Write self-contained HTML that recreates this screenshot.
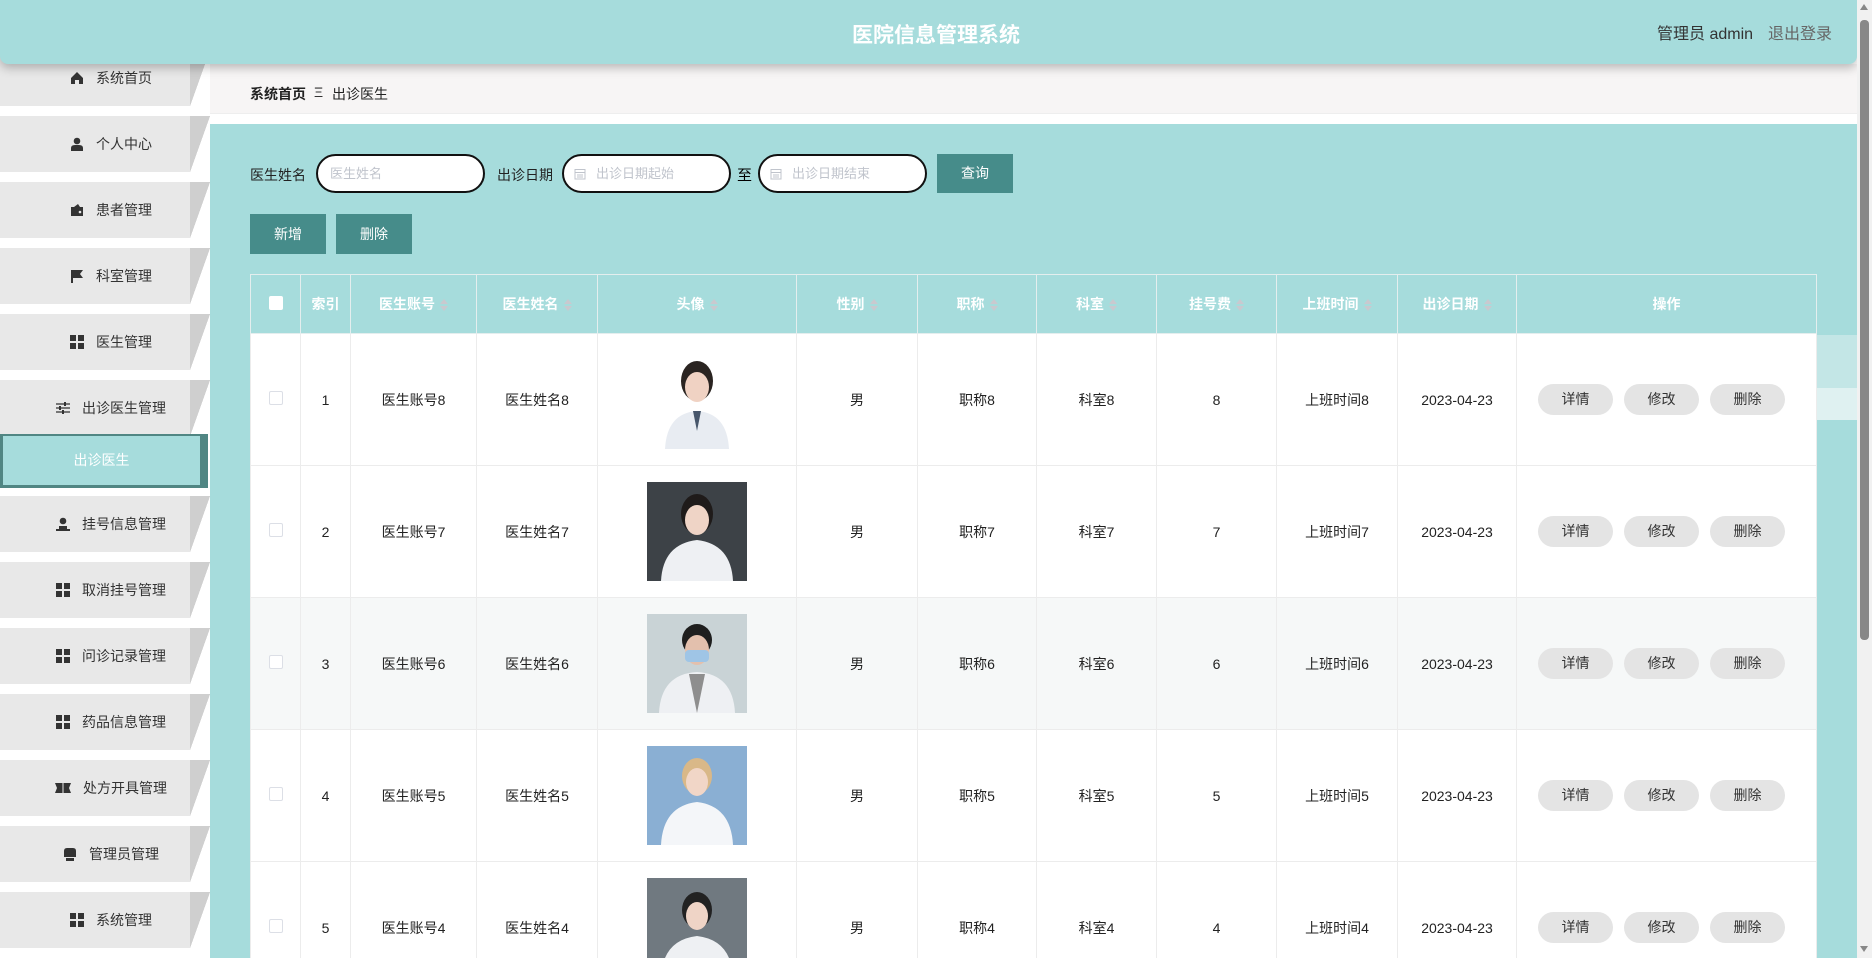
<!DOCTYPE html>
<html><head><meta charset="utf-8"><style>
*{box-sizing:border-box;margin:0;padding:0}
html,body{width:1872px;height:958px;overflow:hidden}
body{background:#fff;font-family:"Liberation Sans","Noto Sans CJK SC",sans-serif;font-size:14px;color:#333}
#wrap{position:relative;width:1872px;height:958px;overflow:hidden}
.abs{position:absolute}
.hdr{left:0;top:0;width:1857px;height:64px;background:#a6dcdc;border-radius:0 0 8px 8px;box-shadow:0 4px 10px rgba(0,0,0,.25);z-index:5}
.title{left:0;width:1872px;top:19px;text-align:center;color:#fff;font-size:21px;font-weight:bold;z-index:6}
.user{left:1657px;top:20px;font-size:16px;color:#333;z-index:6}
.logout{left:1768px;top:20px;font-size:16px;color:#666;z-index:6}
.sb{left:0;top:0;width:210px;height:958px;background:#fff}
.item{position:absolute;left:0;width:210px;height:56px}
.item .g{position:absolute;left:0;top:0;width:190px;height:56px;background:#e8e8e8}
.item .d{position:absolute;left:190px;top:0;width:20px;height:56px;background:linear-gradient(to bottom right,#cfcfcf 50%,#fff 50.5%)}
.item .c{position:absolute;left:32px;width:158px;top:0;height:56px;display:flex;align-items:center;justify-content:center;font-size:14px;color:#333}
.item svg{margin-right:12px}
.act{left:0;top:434px;width:208px;height:54px;background:#a6dcdc;border-right:8px solid #508683;border-bottom:3px solid #508683;border-top:2px solid #508683;border-left:3px solid #508683;color:#fff;text-align:center;line-height:48px;font-size:14px}
.bc{left:210px;top:64px;width:1647px;height:50px;background:#f7f5f5;border-bottom:1px solid #eee}
.main{left:210px;top:124px;width:1647px;height:834px;background:#a6dcdc}
.lbl{font-size:14px;color:#222}
.inp{height:39px;border:2px solid #111;border-radius:20px;background:#fff;color:#c0c4cc;font-size:13px;line-height:35px;padding-left:12px}
.btn{background:#468c8a;color:#fff;text-align:center;font-size:14px}
table{position:absolute;left:250px;top:274px;border-collapse:collapse;table-layout:fixed;width:1566px}
th{height:59px;background:#a6dcdc;color:#fff;font-weight:bold;border:1px solid #e4eeee;font-size:14px}
td{height:132px;border:1px solid #ececec;text-align:center;font-size:14px;color:#222;background:#fff}
td.ops{text-align:left;padding-left:21px}
tr.alt td{background:#f6f8f8}
.ar{display:inline-block;width:8px;height:12px;vertical-align:middle;margin-left:5px;position:relative}
.ar:before{content:"";position:absolute;left:0;top:0;border:4px solid transparent;border-bottom:5px solid #c9c9cf;border-top:0}
.ar:after{content:"";position:absolute;left:0;top:7px;border:4px solid transparent;border-top:5px solid #c9c9cf;border-bottom:0}
.cb{display:inline-block;width:14px;height:14px;border:1px solid #dcdfe6;border-radius:2px;background:#fff}
.op{display:inline-block;width:75px;height:31px;line-height:31px;border-radius:16px;background:#e4e4e4;color:#333;margin-right:11px;font-size:14px;text-align:center}
.ph{display:inline-block;vertical-align:middle}
.sc{left:1857px;top:0;width:15px;height:958px;background:#f1f1f1;z-index:9}
</style></head><body><div id="wrap">
<div class="abs sb"></div>
<div class="abs main"></div>
<div class="abs bc"><span class="abs" style="left:40px;top:20px;font-weight:bold;font-size:14px;color:#222">系统首页</span><span class="abs" style="left:104px;top:20px;color:#333">Ξ</span><span class="abs" style="left:122px;top:20px;color:#222">出诊医生</span></div>

<div class="item" style="top:50px"><div class="g"></div><div class="d"></div><div class="c"><svg width="14" height="14" viewBox="0 0 14 14"><path d="M7 1 L13 7 V13 H9 V9 H5 V13 H1 V7 Z" fill="#333"/></svg>系统首页</div></div>
<div class="item" style="top:116px"><div class="g"></div><div class="d"></div><div class="c"><svg width="14" height="14" viewBox="0 0 14 14"><circle cx="7" cy="4" r="3.3" fill="#333"/><path d="M1 14 V11 Q1 8 5 8 H9 Q13 8 13 11 V14 Z" fill="#333"/></svg>个人中心</div></div>
<div class="item" style="top:182px"><div class="g"></div><div class="d"></div><div class="c"><svg width="14" height="14" viewBox="0 0 14 14"><path d="M1 4 H13 V13 H1 Z M4 4 L8 1 L10 4" fill="#333"/><circle cx="10" cy="9" r="1.3" fill="#e8e8e8"/></svg>患者管理</div></div>
<div class="item" style="top:248px"><div class="g"></div><div class="d"></div><div class="c"><svg width="14" height="14" viewBox="0 0 14 14"><path d="M2 1 V14" stroke="#333" stroke-width="2"/><path d="M3 1 H13 L10 5 L13 9 H3 Z" fill="#333"/></svg>科室管理</div></div>
<div class="item" style="top:314px"><div class="g"></div><div class="d"></div><div class="c"><svg width="14" height="14" viewBox="0 0 14 14"><rect x="0" y="0" width="6" height="6" fill="#333"/><rect x="8" y="0" width="6" height="6" fill="#333"/><rect x="0" y="8" width="6" height="6" fill="#333"/><rect x="8" y="8" width="6" height="6" fill="#333"/></svg>医生管理</div></div>
<div class="item" style="top:380px"><div class="g"></div><div class="d"></div><div class="c"><svg width="14" height="14" viewBox="0 0 14 14"><path d="M0 3H14M0 7H14M0 11H14" stroke="#333" stroke-width="1.3"/><rect x="8" y="1" width="2" height="4" fill="#333"/><rect x="3" y="5" width="2" height="4" fill="#333"/><rect x="6" y="9" width="2" height="4" fill="#333"/></svg>出诊医生管理</div></div>
<div class="abs act">出诊医生</div>
<div class="item" style="top:496px"><div class="g"></div><div class="d"></div><div class="c"><svg width="14" height="14" viewBox="0 0 14 14"><circle cx="7" cy="4" r="3.3" fill="#333"/><path d="M3 9 H11 V12 H3 Z M0 12 H14 V14 H0 Z" fill="#333"/></svg>挂号信息管理</div></div>
<div class="item" style="top:562px"><div class="g"></div><div class="d"></div><div class="c"><svg width="14" height="14" viewBox="0 0 14 14"><rect x="0" y="0" width="6" height="6" fill="#333"/><rect x="8" y="0" width="6" height="6" fill="#333"/><rect x="0" y="8" width="6" height="6" fill="#333"/><rect x="8" y="8" width="6" height="6" fill="#333"/></svg>取消挂号管理</div></div>
<div class="item" style="top:628px"><div class="g"></div><div class="d"></div><div class="c"><svg width="14" height="14" viewBox="0 0 14 14"><rect x="0" y="0" width="6" height="6" fill="#333"/><rect x="8" y="0" width="6" height="6" fill="#333"/><rect x="0" y="8" width="6" height="6" fill="#333"/><rect x="8" y="8" width="6" height="6" fill="#333"/></svg>问诊记录管理</div></div>
<div class="item" style="top:694px"><div class="g"></div><div class="d"></div><div class="c"><svg width="14" height="14" viewBox="0 0 14 14"><rect x="0" y="0" width="6" height="6" fill="#333"/><rect x="8" y="0" width="6" height="6" fill="#333"/><rect x="0" y="8" width="6" height="6" fill="#333"/><rect x="8" y="8" width="6" height="6" fill="#333"/></svg>药品信息管理</div></div>
<div class="item" style="top:760px"><div class="g"></div><div class="d"></div><div class="c"><svg width="16" height="14" viewBox="0 0 16 14"><path d="M0 2 H16 L14 7 L16 12 H0 L2 7 Z" fill="#333"/><path d="M8 2V12" stroke="#e8e8e8" stroke-width="1"/></svg>处方开具管理</div></div>
<div class="item" style="top:826px"><div class="g"></div><div class="d"></div><div class="c"><svg width="14" height="14" viewBox="0 0 14 14"><path d="M1 4 Q1 1 4 1 H10 Q13 1 13 4 V10 H1 Z" fill="#333"/><path d="M3 11 H11 V14 H3 Z" fill="#333"/></svg>管理员管理</div></div>
<div class="item" style="top:892px"><div class="g"></div><div class="d"></div><div class="c"><svg width="14" height="14" viewBox="0 0 14 14"><rect x="0" y="0" width="6" height="6" fill="#333"/><rect x="8" y="0" width="6" height="6" fill="#333"/><rect x="0" y="8" width="6" height="6" fill="#333"/><rect x="8" y="8" width="6" height="6" fill="#333"/></svg>系统管理</div></div>

<div class="abs hdr"></div>
<div class="abs title">医院信息管理系统</div>
<div class="abs user">管理员 admin</div>
<div class="abs logout">退出登录</div>

<span class="abs lbl" style="left:250px;top:165px">医生姓名</span>
<div class="abs inp" style="left:316px;top:154px;width:169px">医生姓名</div>
<span class="abs lbl" style="left:497px;top:165px">出诊日期</span>
<div class="abs inp" style="left:562px;top:154px;width:169px;padding-left:32px">出诊日期起始<svg class="abs" style="left:10px;top:12px" width="12" height="12" viewBox="0 0 12 12"><rect x="1" y="1.5" width="10" height="9.5" fill="none" stroke="#c0c4cc"/><path d="M1 4.5H11M3 7H9M3 9H9" stroke="#c0c4cc"/></svg></div>
<span class="abs lbl" style="left:737px;top:164px;font-size:15px;color:#000">至</span>
<div class="abs inp" style="left:758px;top:154px;width:169px;padding-left:32px">出诊日期结束<svg class="abs" style="left:10px;top:12px" width="12" height="12" viewBox="0 0 12 12"><rect x="1" y="1.5" width="10" height="9.5" fill="none" stroke="#c0c4cc"/><path d="M1 4.5H11M3 7H9M3 9H9" stroke="#c0c4cc"/></svg></div>
<div class="abs btn" style="left:937px;top:154px;width:76px;height:39px;line-height:39px">查询</div>
<div class="abs btn" style="left:250px;top:214px;width:76px;height:40px;line-height:40px">新增</div>
<div class="abs btn" style="left:336px;top:214px;width:76px;height:40px;line-height:40px">删除</div>

<div class="abs" style="left:1816px;top:335px;width:41px;height:53px;background:#c3e6e6"></div>
<div class="abs" style="left:1816px;top:388px;width:41px;height:32px;background:#dff1f1"></div>

<table>
<colgroup><col style="width:50px"><col style="width:50px"><col style="width:126px"><col style="width:121px"><col style="width:199px"><col style="width:121px"><col style="width:119px"><col style="width:120px"><col style="width:120px"><col style="width:121px"><col style="width:119px"><col style="width:300px"></colgroup>
<tr><th><span class="cb" style="border-color:#fff"></span></th><th>索引</th><th>医生账号<i class="ar"></i></th><th>医生姓名<i class="ar"></i></th><th>头像<i class="ar"></i></th><th>性别<i class="ar"></i></th><th>职称<i class="ar"></i></th><th>科室<i class="ar"></i></th><th>挂号费<i class="ar"></i></th><th>上班时间<i class="ar"></i></th><th>出诊日期<i class="ar"></i></th><th>操作</th></tr>
<tr><td><span class="cb"></span></td><td>1</td><td>医生账号8</td><td>医生姓名8</td><td><svg class="ph" width="72" height="98" viewBox="0 0 72 98"><rect width="72" height="98" fill="#fff"/><ellipse cx="36" cy="30" rx="16" ry="20" fill="#2a2421"/><ellipse cx="36" cy="36" rx="12" ry="15" fill="#f0d2c3"/><path d="M4 98 Q6 62 36 60 Q66 62 68 98 Z" fill="#e8ecf2"/><path d="M32 60 L36 80 L40 60 Z" fill="#47566b"/></svg></td><td>男</td><td>职称8</td><td>科室8</td><td>8</td><td>上班时间8</td><td>2023-04-23</td><td class="ops"><span class="op">详情</span><span class="op">修改</span><span class="op">删除</span></td></tr>
<tr><td><span class="cb"></span></td><td>2</td><td>医生账号7</td><td>医生姓名7</td><td><svg class="ph" width="100" height="99" viewBox="0 0 100 99"><rect width="100" height="99" fill="#3d4247"/><ellipse cx="50" cy="32" rx="16" ry="20" fill="#1f1b1a"/><ellipse cx="50" cy="38" rx="12" ry="15" fill="#efd4c6"/><path d="M14 99 Q16 62 50 58 Q84 62 86 99 Z" fill="#eef0f3"/></svg></td><td>男</td><td>职称7</td><td>科室7</td><td>7</td><td>上班时间7</td><td>2023-04-23</td><td class="ops"><span class="op">详情</span><span class="op">修改</span><span class="op">删除</span></td></tr>
<tr class="alt"><td><span class="cb"></span></td><td>3</td><td>医生账号6</td><td>医生姓名6</td><td><svg class="ph" width="100" height="99" viewBox="0 0 100 99"><rect width="100" height="99" fill="#c9d3d6"/><ellipse cx="50" cy="26" rx="15" ry="16" fill="#1e1e1e"/><ellipse cx="50" cy="36" rx="12" ry="15" fill="#e3c0ad"/><rect x="38" y="36" width="24" height="12" rx="4" fill="#9fc5e6"/><path d="M12 99 Q14 60 50 58 Q86 60 88 99 Z" fill="#eef0f3"/><path d="M42 60 L50 99 L58 60 Z" fill="#8e8e8e"/></svg></td><td>男</td><td>职称6</td><td>科室6</td><td>6</td><td>上班时间6</td><td>2023-04-23</td><td class="ops"><span class="op">详情</span><span class="op">修改</span><span class="op">删除</span></td></tr>
<tr><td><span class="cb"></span></td><td>4</td><td>医生账号5</td><td>医生姓名5</td><td><svg class="ph" width="100" height="99" viewBox="0 0 100 99"><rect width="100" height="99" fill="#6d98c4"/><rect x="0" y="0" width="100" height="99" fill="#a8c6e2" opacity=".5"/><ellipse cx="50" cy="30" rx="15" ry="18" fill="#d9b888"/><ellipse cx="50" cy="36" rx="11" ry="14" fill="#f1d6c7"/><path d="M14 99 Q16 60 50 56 Q84 60 86 99 Z" fill="#f4f6f9"/></svg></td><td>男</td><td>职称5</td><td>科室5</td><td>5</td><td>上班时间5</td><td>2023-04-23</td><td class="ops"><span class="op">详情</span><span class="op">修改</span><span class="op">删除</span></td></tr>
<tr><td><span class="cb"></span></td><td>5</td><td>医生账号4</td><td>医生姓名4</td><td><svg class="ph" width="100" height="99" viewBox="0 0 100 99"><rect width="100" height="99" fill="#707980"/><ellipse cx="50" cy="32" rx="15" ry="18" fill="#222"/><ellipse cx="50" cy="38" rx="11" ry="14" fill="#efd4c6"/><path d="M14 99 Q16 62 50 58 Q84 62 86 99 Z" fill="#eef0f3"/></svg></td><td>男</td><td>职称4</td><td>科室4</td><td>4</td><td>上班时间4</td><td>2023-04-23</td><td class="ops"><span class="op">详情</span><span class="op">修改</span><span class="op">删除</span></td></tr>
</table>

<div class="abs sc"><div class="abs" style="left:3px;top:4px;border:4px solid transparent;border-bottom:6px solid #888;border-top:0"></div><div class="abs" style="left:3px;top:20px;width:9px;height:620px;background:#888;border-radius:4px"></div><div class="abs" style="left:3px;top:946px;border:4px solid transparent;border-top:6px solid #888;border-bottom:0"></div></div>
</div></body></html>
